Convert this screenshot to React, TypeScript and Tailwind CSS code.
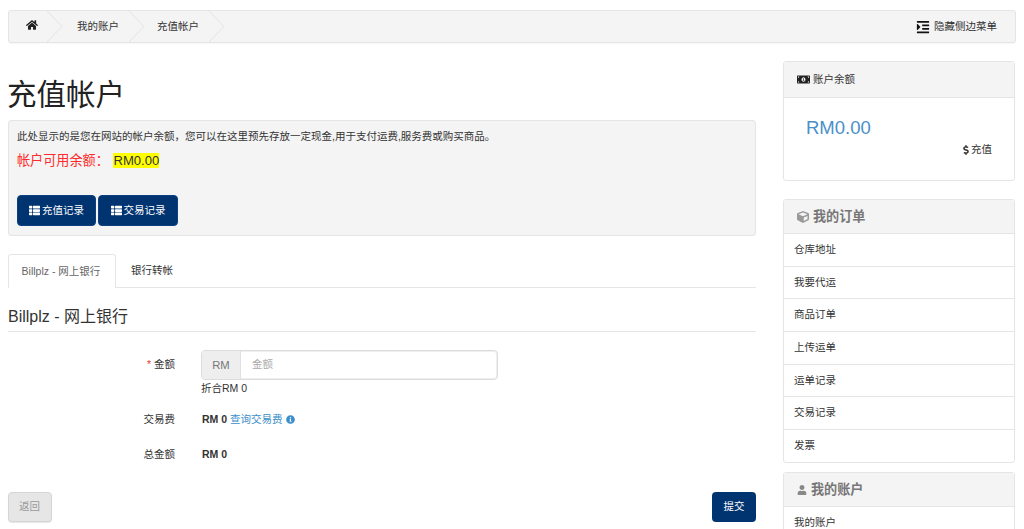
import { FaHome, FaThList, FaMoneyBillAlt, FaCube, FaUser, FaInfoCircle, FaDollarSign, FaIndent } from 'react-icons/fa';

const orderLinks = ['仓库地址', '我要代运', '商品订单', '上传运单', '运单记录', '交易记录', '发票'];

const Chevron = () => (
  <svg width="16" height="31" viewBox="0 0 16 31" className="shrink-0" fill="none">
    <path d="M0 0 L15 15.5 L0 31" stroke="#e3e3e3" strokeWidth="1" />
  </svg>
);

const Crumb = ({ label, w, pad }: { label: string; w: string; pad: string }) => (
  <div className={`flex items-center ${w}`}>
    <span className={`flex-1 whitespace-nowrap ${pad} text-[10.5px] text-[#333]`}>{label}</span>
    <Chevron />
  </div>
);

const App = () => {
  return (
    <div className="h-[529px] overflow-hidden bg-white text-[#333] font-['Liberation_Sans','Noto_Sans_CJK_SC',sans-serif] text-[10.5px]">
      <div className="px-2 pt-[10px]">
        {/* Breadcrumb */}
        <div className="flex h-[33px] items-center rounded-[3px] border border-[#e5e5e5] bg-[#f4f4f4] shadow-[0_1px_1px_rgba(0,0,0,0.03)]">
          <div className="flex w-[54px] items-center">
            <span className="flex flex-1 justify-center pl-[8px] pb-[3px]"><FaHome size={12} className="text-[#222]" /></span>
            <Chevron />
          </div>
          <Crumb label="我的账户" w="w-[82px]" pad="pl-[14px]" />
          <Crumb label="充值帐户" w="w-[80px]" pad="pl-[12px]" />
          <div className="ml-auto flex items-center gap-[4px] pr-[18px] text-[#333]">
            <FaIndent size={14} className="text-[#111]" />
            <span>隐藏侧边菜单</span>
          </div>
        </div>

        <div className="mt-[18px] flex gap-[27px]">
          {/* Main column */}
          <div className="w-[748px] shrink-0">
            <h1 className="mt-[16px] ml-[-1px] text-[29.5px] leading-[36px] font-normal text-[#222]">充值帐户</h1>

            <div className="mt-[7px] h-[116px] rounded-[3px] border border-[#e5e5e5] bg-[#f4f4f4] pl-2 pt-[8px]">
              <p className="leading-[15px] text-[#333]">此处显示的是您在网站的帐户余额，您可以在这里预先存放一定现金,用于支付运费,服务费或购买商品。</p>
              <p className="mt-[7px] text-[13.125px] leading-[20px] text-[#ff2a2a]">
                帐户可用余额： <span className="ml-[1px] bg-[#ffff00] text-[#333]">RM0.00</span>
              </p>
              <div className="mt-[24px] flex gap-[2px]">
                <button className="flex h-[31px] w-[79px] items-center justify-center gap-[2px] rounded-[4px] border border-[#0b3f80] bg-[#003471] text-white">
                  <FaThList size={11} />充值记录
                </button>
                <button className="flex h-[31px] w-[80px] items-center justify-center gap-[2px] rounded-[4px] border border-[#0b3f80] bg-[#003471] text-white">
                  <FaThList size={11} />交易记录
                </button>
              </div>
            </div>

            {/* Tabs */}
            <div className="mt-[18px] flex h-[34px] border-b border-[#e5e5e5]">
              <div className="mb-[-1px] flex w-[108px] items-center justify-center rounded-t-[3px] border border-b-0 border-[#e5e5e5] bg-white pr-[2px] text-[#666]">Billplz - 网上银行</div>
              <div className="flex w-[72px] items-center justify-center text-[#333]">银行转帐</div>
            </div>

            <h4 className="mt-[19px] border-b border-[#e5e5e5] pb-[4px] text-[16px] leading-[20px] font-normal text-[#333]">Billplz - 网上银行</h4>

            {/* Form */}
            <div className="mt-[18px] flex">
              <label className="w-[167px] shrink-0 pt-[7px] text-right leading-[15px]"><span className="text-[#e33]">* </span>金额</label>
              <div className="ml-[26px]">
                <div className="flex h-[30px] w-[297px] rounded-[4px] border border-[#dcdcdc] bg-white shadow-[inset_0_0_0_1px_#efefef]">
                  <span className="flex w-[39px] items-center justify-center rounded-l-[3px] border-r border-[#e0e0e0] bg-[#eeeeee] text-[11.25px] text-[#777]">RM</span>
                  <span className="flex items-center pl-[11px] text-[#aaa]">金额</span>
                </div>
                <p className="mt-[1px] leading-[15px]">折合RM 0</p>
              </div>
            </div>

            <div className="mt-[16px] flex items-center leading-[15px]">
              <label className="w-[167px] shrink-0 text-right">交易费</label>
              <div className="ml-[27px] flex items-center">
                <b>RM 0</b>
                <span className="ml-[3px] text-[#3b8ec9]">查询交易费</span>
                <FaInfoCircle size={9} className="ml-[3px] text-[#3b8ec9]" />
              </div>
            </div>

            <div className="mt-[20px] flex items-center leading-[15px]">
              <label className="w-[167px] shrink-0 text-right">总金额</label>
              <b className="ml-[27px]">RM 0</b>
            </div>

            <div className="mt-[30px] flex justify-between">
              <button className="h-[30px] w-[44px] rounded-[4px] border border-[#d5d5d5] bg-[#e6e6e6] pr-[1px] text-[#999] shadow-[0_1px_1px_rgba(0,0,0,0.1)]">返回</button>
              <button className="h-[30px] w-[44px] rounded-[4px] bg-[#003471] text-white">提交</button>
            </div>
          </div>

          {/* Sidebar */}
          <div className="flex w-[232px] shrink-0 flex-col gap-[18px]">
            <div className="h-[120px] rounded-[3px] border border-[#e5e5e5]">
              <div className="flex h-[36px] items-center gap-[3px] border-b border-[#e5e5e5] bg-[#f4f4f4] pl-[13px] text-[#333]">
                <FaMoneyBillAlt size={13} className="text-[#222]" />账户余额
              </div>
              <p className="mt-[20px] pl-[22px] text-[18.5px] leading-[20px] text-[#4a90c8]">RM0.00</p>
              <div className="mt-[4px] flex items-center justify-end pr-[22px] text-[#333]">
                <FaDollarSign size={10} />充值
              </div>
            </div>

            <div className="rounded-[3px] border border-[#e5e5e5]">
              <div className="flex h-[33px] items-center gap-[4px] bg-[#f4f4f4] pl-[13px] text-[13.125px] font-bold text-[#777]">
                <FaCube size={12} className="text-[#999]" />我的订单
              </div>
              {orderLinks.map((link) => (
                <div key={link} className="flex h-[32.7px] items-center border-t border-[#e5e5e5] pl-[10px] text-[#333]">{link}</div>
              ))}
            </div>

            <div className="mt-[-9px] rounded-[3px] border border-[#e5e5e5]">
              <div className="flex h-[33px] items-center gap-[4px] bg-[#f4f4f4] pl-[13px] pt-[1px] text-[13.125px] font-bold text-[#777]">
                <FaUser size={10} className="text-[#888]" />我的账户
              </div>
              <div className="flex h-[33px] items-center border-t border-[#e5e5e5] pl-[10px] text-[#333]">我的账户</div>
            </div>
          </div>
        </div>
      </div>
    </div>
  );
};

export default App;
